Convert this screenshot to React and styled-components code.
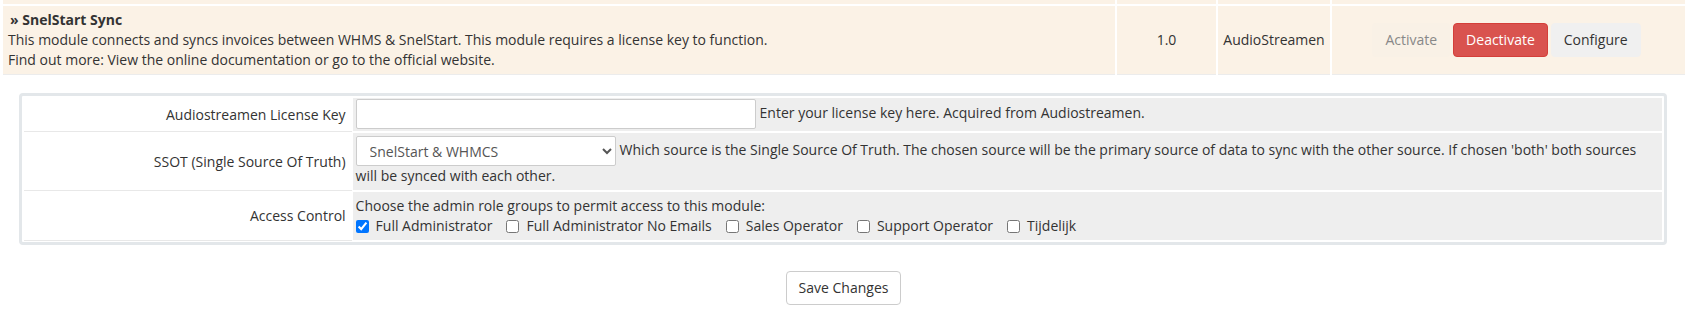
import React from 'react';
import styled, { createGlobalStyle } from 'styled-components';

const GlobalStyle = createGlobalStyle`
  body {
    margin: 0;
    background: #fff;
    font-family: "Open Sans", "Liberation Sans", sans-serif;
    font-size: 14px;
    line-height: 20px;
    color: #333;
  }
`

const ModuleTable = styled.table`
  width: calc(100% - 1px);
  margin-left: 1px;
  margin-top: -2px;
  table-layout: fixed;
  border-collapse: separate;
  border-spacing: 2px 2px;
`

const Cell = styled.td`
  background: #fbf2e6;
  padding: ${p => (p.$stub ? '0' : '4px 5px')};
  height: ${p => (p.$stub ? '4px' : 'auto')};
  text-align: ${p => p.$align || 'left'};
  vertical-align: middle;
  border-bottom: ${p => (p.$stub ? 'none' : '1px solid #ececec')};
  white-space: nowrap;
`

const Title = styled.strong`
  display: block;
  padding-left: 2px;
  font-weight: 700;
`

const Actions = styled.div`
  display: flex;
  justify-content: center;
  gap: 3px;
  padding-right: 4px;
`

const Btn = styled.button`
  font-family: inherit;
  font-size: 14px;
  line-height: 20px;
  padding: 6px 12px;
  border-radius: 4px;
  border: 1px solid transparent;
  cursor: pointer;
  background: ${p => (p.$variant === 'danger' ? '#d9534f' : p.$variant === 'muted' ? '#f9f1e6' : '#f0f0f0')};
  border-color: ${p => (p.$variant === 'danger' ? '#d43f3a' : p.$variant === 'muted' ? '#f9f1e6' : '#f0f0f0')};
  color: ${p => (p.$variant === 'danger' ? '#fff' : p.$variant === 'muted' ? '#888' : '#333')};
`

const Panel = styled.div`
  margin: 16px 20px 0 19px;
  border: 3px solid #e3e7ea;
  border-radius: 4px;
  padding: 0 2px;
  background: #fff;
`

const FormTable = styled.table`
  width: 100%;
  border-collapse: separate;
  border-spacing: 0 2px;
`

const Label = styled.td`
  width: 20%;
  text-align: right;
  padding: 4px 6px 4px 4px;
  vertical-align: middle;
  background: #fff;
  box-shadow: 0 1px 0 #e8e8e8;
`

const Field = styled.td`
  background: #eeeeee;
  padding: 4px 3px;
  border-left: 1px solid #fff;
  vertical-align: middle;
`

const TextInput = styled.input`
  width: 400px;
  height: 30px;
  box-sizing: border-box;
  border: 1px solid #ccc;
  border-radius: 2px;
  background: #fff;
  font-family: inherit;
  font-size: 14px;
  vertical-align: middle;
  margin: -3px 4px -2px 0;
`

const Select = styled.select`
  width: 260px;
  height: 30px;
  box-sizing: border-box;
  border: 1px solid #ccc;
  border-radius: 2px;
  background: #fff;
  font-family: inherit;
  font-size: 14px;
  color: #555;
  padding-left: 9px;
  vertical-align: middle;
  margin: -1px 4px 0 0;
`

const Checks = styled.div`
  display: flex;
  gap: 14px;
`

const Check = styled.label`
  display: inline-flex;
  align-items: center;
  gap: 7px;

  input {
    margin: 0;
    width: 13px;
    height: 13px;
  }
`

const Footer = styled.div`
  display: flex;
  justify-content: center;
  padding-top: 26px;
`

const SaveButton = styled.button`
  font-family: inherit;
  font-size: 14px;
  line-height: 20px;
  padding: 6px 12px;
  background: #fff;
  color: #333;
  border: 1px solid #ccc;
  border-radius: 4px;
  cursor: pointer;
`

const roles = [
  { name: 'Full Administrator', checked: true },
  { name: 'Full Administrator No Emails' },
  { name: 'Sales Operator' },
  { name: 'Support Operator' },
  { name: 'Tijdelijk' },
];

export default function App() {
  return (
    <>
      <GlobalStyle />
      <ModuleTable>
        <colgroup>
          <col style={{ width: '1112px' }} />
          <col style={{ width: '99px' }} />
          <col style={{ width: '112px' }} />
          <col />
        </colgroup>
        <tbody>
          <tr>
            <Cell $stub />
            <Cell $stub />
            <Cell $stub />
            <Cell $stub />
          </tr>
          <tr>
            <Cell>
              <Title>» SnelStart Sync</Title>
              This module connects and syncs invoices between WHMS &amp; SnelStart. This module requires a license key to function.
              <br />
              Find out more: View the online documentation or go to the official website.
            </Cell>
            <Cell $align="center">1.0</Cell>
            <Cell $align="center">AudioStreamen</Cell>
            <Cell>
              <Actions>
                <Btn $variant="muted">Activate</Btn>
                <Btn $variant="danger">Deactivate</Btn>
                <Btn>Configure</Btn>
              </Actions>
            </Cell>
          </tr>
        </tbody>
      </ModuleTable>

      <Panel>
        <FormTable>
          <tbody>
            <tr>
              <Label>Audiostreamen License Key</Label>
              <Field>
                <TextInput type="text" />
                Enter your license key here. Acquired from Audiostreamen.
              </Field>
            </tr>
            <tr>
              <Label>SSOT (Single Source Of Truth)</Label>
              <Field>
                <Select defaultValue="both">
                  <option value="both">SnelStart &amp; WHMCS</option>
                  <option value="snelstart">SnelStart</option>
                  <option value="whmcs">WHMCS</option>
                </Select>
                Which source is the Single Source Of Truth. The chosen source will be the primary source of data to sync with the other source. If chosen 'both' both sources will be synced with each other.
              </Field>
            </tr>
            <tr>
              <Label>Access Control</Label>
              <Field>
                Choose the admin role groups to permit access to this module:
                <Checks>
                  {roles.map(r => (
                    <Check key={r.name}>
                      <input type="checkbox" defaultChecked={r.checked} />
                      {r.name}
                    </Check>
                  ))}
                </Checks>
              </Field>
            </tr>
          </tbody>
        </FormTable>
      </Panel>

      <Footer>
        <SaveButton>Save Changes</SaveButton>
      </Footer>
    </>
  );
}
